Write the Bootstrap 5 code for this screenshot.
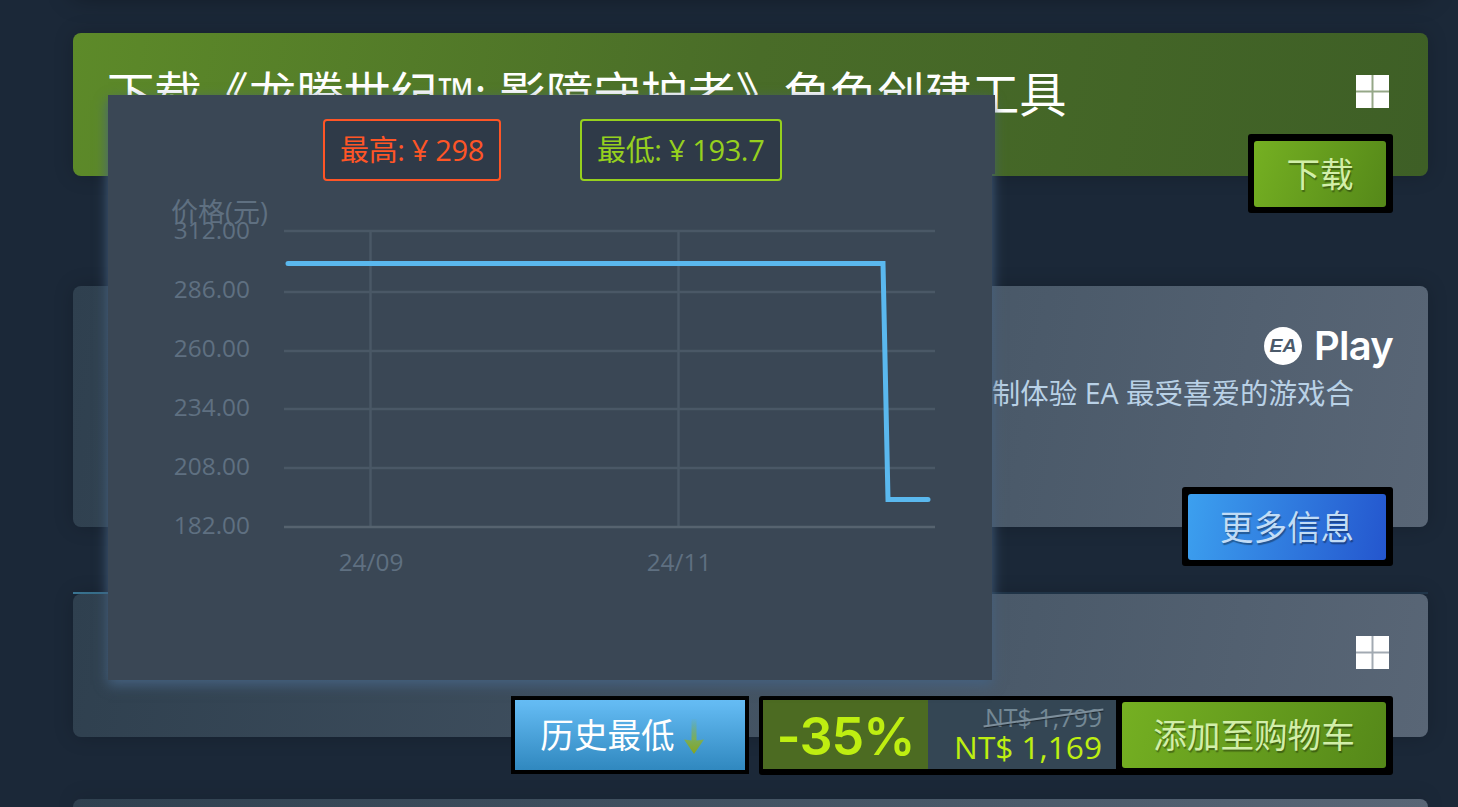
<!doctype html>
<html lang="zh-CN">
<head>
<meta charset="utf-8">
<title>Steam</title>
<link href="https://cdn.jsdelivr.net/npm/bootstrap@5.3.0/dist/css/bootstrap.min.css" rel="stylesheet">
<style>
html,body{height:807px;overflow:hidden}
body{background:#1b2838;font-family:"Open Sans","Noto Sans CJK SC",sans-serif;position:relative}
.page-col{padding:0 30px 0 73px}
.top-stub{height:40px;margin-top:-43px;background:#222f3f;border-radius:4px;box-shadow:0 0 24px rgba(0,0,0,.35)}
.tile{border-radius:8px;box-shadow:0 0 20px rgba(0,0,0,.18);padding:0 35px}
.tile-dl{margin-top:36px;height:143px;background:linear-gradient(100deg,#5d8a29 0%,#496c28 50%,#3e5f26 100%)}
.tile-ea{margin-top:110px;height:241px;background:linear-gradient(100deg,#2f404f 0%,#4b5a6a 70%,#596676 100%)}
.tile-game{height:143px;background:linear-gradient(100deg,#2f404f 0%,#4b5a6a 70%,#596676 100%)}
.tile-next{margin-top:62px;height:8px;border-radius:8px 8px 0 0;background:linear-gradient(100deg,#2f404f 0%,#4b5a6a 70%,#596676 100%)}
.tile-rule{margin-top:65px;height:2px;background:linear-gradient(90deg,#3d7a99,#22384d 60%)}
.dl-title{font-size:47.300px;line-height:48px;color:#fff;padding-top:37px;margin-left:-1px;white-space:nowrap}
.win-ico{width:33px;height:33px;flex:none;margin-top:42px;margin-right:4px}
.ea-logo{padding-top:38px;height:82px;gap:12px}
.ea-play{font-family:Inter,"Open Sans",sans-serif;font-weight:600;font-size:40px;line-height:40px;color:#fff;letter-spacing:-.8px}
.ea-desc{font-size:28.500px;line-height:36px;color:#b9d1e6;padding-right:39px;padding-top:7px;white-space:nowrap}
.cta-shell{background:#000;border-radius:3px;padding:7px 7px 6px 6px}
.cta{display:flex;align-items:center;justify-content:center;height:66px;border-radius:3px;font-size:33.600px;line-height:1;padding-top:2px;text-shadow:1px 2px 1px rgba(0,0,0,.35)}
.cta-green{background:linear-gradient(110deg,#75b022,#558819);color:#d2efa9}
.cta-blue{background:linear-gradient(100deg,#3ca0ef,#2456ce);color:#c1dcf6}
.w-dl{width:132px}.w-more{width:198px}.w-cart{width:264px}
.dl-row{margin-bottom:-37px}
.ea-row{margin-bottom:-39px}
.game-row{margin-bottom:-38px}
.low-box{width:238px;height:78px;background:#000;padding:4px;margin-right:10px}
.low-in{height:100%;background:linear-gradient(180deg,#66bdf5,#3088bf);color:#fff;font-size:33.600px;padding-top:0;padding-right:14px}
.low-ico{width:24px;height:38px;margin-left:7px;margin-top:3px}
.buy-shell{background:#000;border-radius:3px;padding:4px 7px 6px 4px;height:79px}
.disc{width:165px;height:69px;background:#4c6b22;color:#beee11;font-size:52px;font-weight:600;line-height:1;padding-top:5px;font-family:Inter,"Open Sans",sans-serif;letter-spacing:-1px}
.price{width:188px;height:69px;background:#344654;padding-right:14px;margin-right:6px}
.old-price{position:relative;font-size:25px;line-height:24px;color:#738895;margin-top:5px}
.old-price::after{content:"";position:absolute;left:-2px;right:-2px;top:12px;height:2px;background:#7d8f9c;box-shadow:0 1px 1px rgba(0,0,0,.5);transform:rotate(-8deg)}
.new-price{font-size:31.600px;line-height:36px;color:#beee11}
.cta-cart{margin-top:2px}
.chart-pop{position:absolute;left:108px;top:95px;width:884px;height:585px;background:#3a4755;box-shadow:0 5px 12px #45617f;padding-top:24px}
.chart-pop::after{content:"";position:absolute;left:100%;top:0;width:3px;height:79px;background:#3a4755}
.tags{padding-left:215px;gap:79px}
.ptag{height:62px;border:2px solid;border-radius:4px;background:#2f3a48;font-size:29px;line-height:58px;padding:0 15px;letter-spacing:-.35px;white-space:nowrap}
.ptag-hi{width:178px;color:#ff5526;border-color:#ff5526}
.ptag-lo{width:202px;color:#96d01e;border-color:#96d01e}
.chart-svg{display:block;margin-top:9px}
.chart-svg text{font-family:"Open Sans","Noto Sans CJK SC",sans-serif;font-size:24.400px;fill:#5f7081}
.chart-svg .axis-name{font-size:27px}
</style>
</head>
<body>
<main class="page-col">
  <div class="top-stub"></div>

  <section class="tile tile-dl d-flex flex-column">
    <div class="d-flex justify-content-between">
      <div class="dl-title">下载《龙腾世纪™: 影障守护者》角色创建工具</div>
      <svg class="win-ico" viewBox="0 0 33 33"><rect width="33" height="33" fill="#fff" opacity=".45"/><g fill="#fff"><rect width="15.500" height="15.500"/><rect x="17.500" width="15.500" height="15.500"/><rect y="17.500" width="15.500" height="15.500"/><rect x="17.500" y="17.500" width="15.500" height="15.500"/></g></svg>
    </div>
    <div class="d-flex justify-content-end mt-auto dl-row">
      <div class="cta-shell"><a class="cta cta-green w-dl text-decoration-none">下载</a></div>
    </div>
  </section>

  <section class="tile tile-ea d-flex flex-column">
    <div class="ea-logo d-flex justify-content-end align-items-center">
      <svg width="38" height="38" viewBox="0 0 38 38"><circle cx="19" cy="19" r="19" fill="#fff"/><text x="19" y="25" text-anchor="middle" font-family="Liberation Sans,sans-serif" font-style="italic" font-weight="700" font-size="18" textLength="27" lengthAdjust="spacingAndGlyphs" fill="#4b5a6a">EA</text></svg>
      <span class="ea-play">Play</span>
    </div>
    <div class="ea-desc text-end">制体验 EA 最受喜爱的游戏合</div>
    <div class="d-flex justify-content-end mt-auto ea-row">
      <div class="cta-shell"><a class="cta cta-blue w-more text-decoration-none">更多信息</a></div>
    </div>
  </section>

  <div class="tile-rule"></div>
  <section class="tile tile-game d-flex flex-column">
    <div class="d-flex justify-content-end">
      <svg class="win-ico" viewBox="0 0 33 33"><rect width="33" height="33" fill="#fff" opacity=".45"/><g fill="#fff"><rect width="15.500" height="15.500"/><rect x="17.500" width="15.500" height="15.500"/><rect y="17.500" width="15.500" height="15.500"/><rect x="17.500" y="17.500" width="15.500" height="15.500"/></g></svg>
    </div>
    <div class="d-flex justify-content-end align-items-start mt-auto game-row">
      <div class="low-box">
        <div class="low-in d-flex align-items-center justify-content-center">历史最低
          <svg class="low-ico" viewBox="0 0 24 38"><defs><linearGradient id="ar" x1="0" y1="0" x2="0" y2="1"><stop offset="0" stop-color="#8fb32a" stop-opacity=".05"/><stop offset=".55" stop-color="#8fb32a" stop-opacity=".7"/><stop offset="1" stop-color="#86a41f"/></linearGradient></defs><path d="M9.500 1h5v21.500l7.500-1L12 36 2 21.500l7.500 1z" fill="url(#ar)"/></svg>
        </div>
      </div>
      <div class="buy-shell d-flex">
        <div class="disc d-flex align-items-center justify-content-center">-35%</div>
        <div class="price d-flex flex-column align-items-end">
          <div class="old-price">NT$ 1,799</div>
          <div class="new-price">NT$ 1,169</div>
        </div>
        <a class="cta cta-green cta-cart w-cart text-decoration-none">添加至购物车</a>
      </div>
    </div>
  </section>

  <section class="tile tile-next"></section>
</main>

<aside class="chart-pop">
  <div class="tags d-flex">
    <div class="ptag ptag-hi">最高: ¥ 298</div>
    <div class="ptag ptag-lo">最低: ¥ 193.7</div>
  </div>
  <svg class="chart-svg" width="884" height="490" viewBox="108 190 884 490">
    <g stroke="#4a5866" stroke-width="2.500" fill="none">
      <path d="M284 231H935M284 292H935M284 351H935M284 409H935M284 468H935"/>
      <path d="M370.500 231V527M678.500 231V527"/>
      <path d="M284 527H935" stroke="#56636f"/>
    </g>
    <text class="axis-name" x="171" y="222">价格(元)</text>
    <g text-anchor="end">
      <text x="250" y="239">312.00</text>
      <text x="250" y="298">286.00</text>
      <text x="250" y="357">260.00</text>
      <text x="250" y="416">234.00</text>
      <text x="250" y="475">208.00</text>
      <text x="250" y="534">182.00</text>
    </g>
    <g text-anchor="middle">
      <text x="371" y="571">24/09</text>
      <text x="679" y="571">24/11</text>
    </g>
    <path d="M288 263.500H883L888 499.500H928" fill="none" stroke="#5ab8ee" stroke-width="5" stroke-linecap="round"/>
  </svg>
</aside>
</body>
</html>
